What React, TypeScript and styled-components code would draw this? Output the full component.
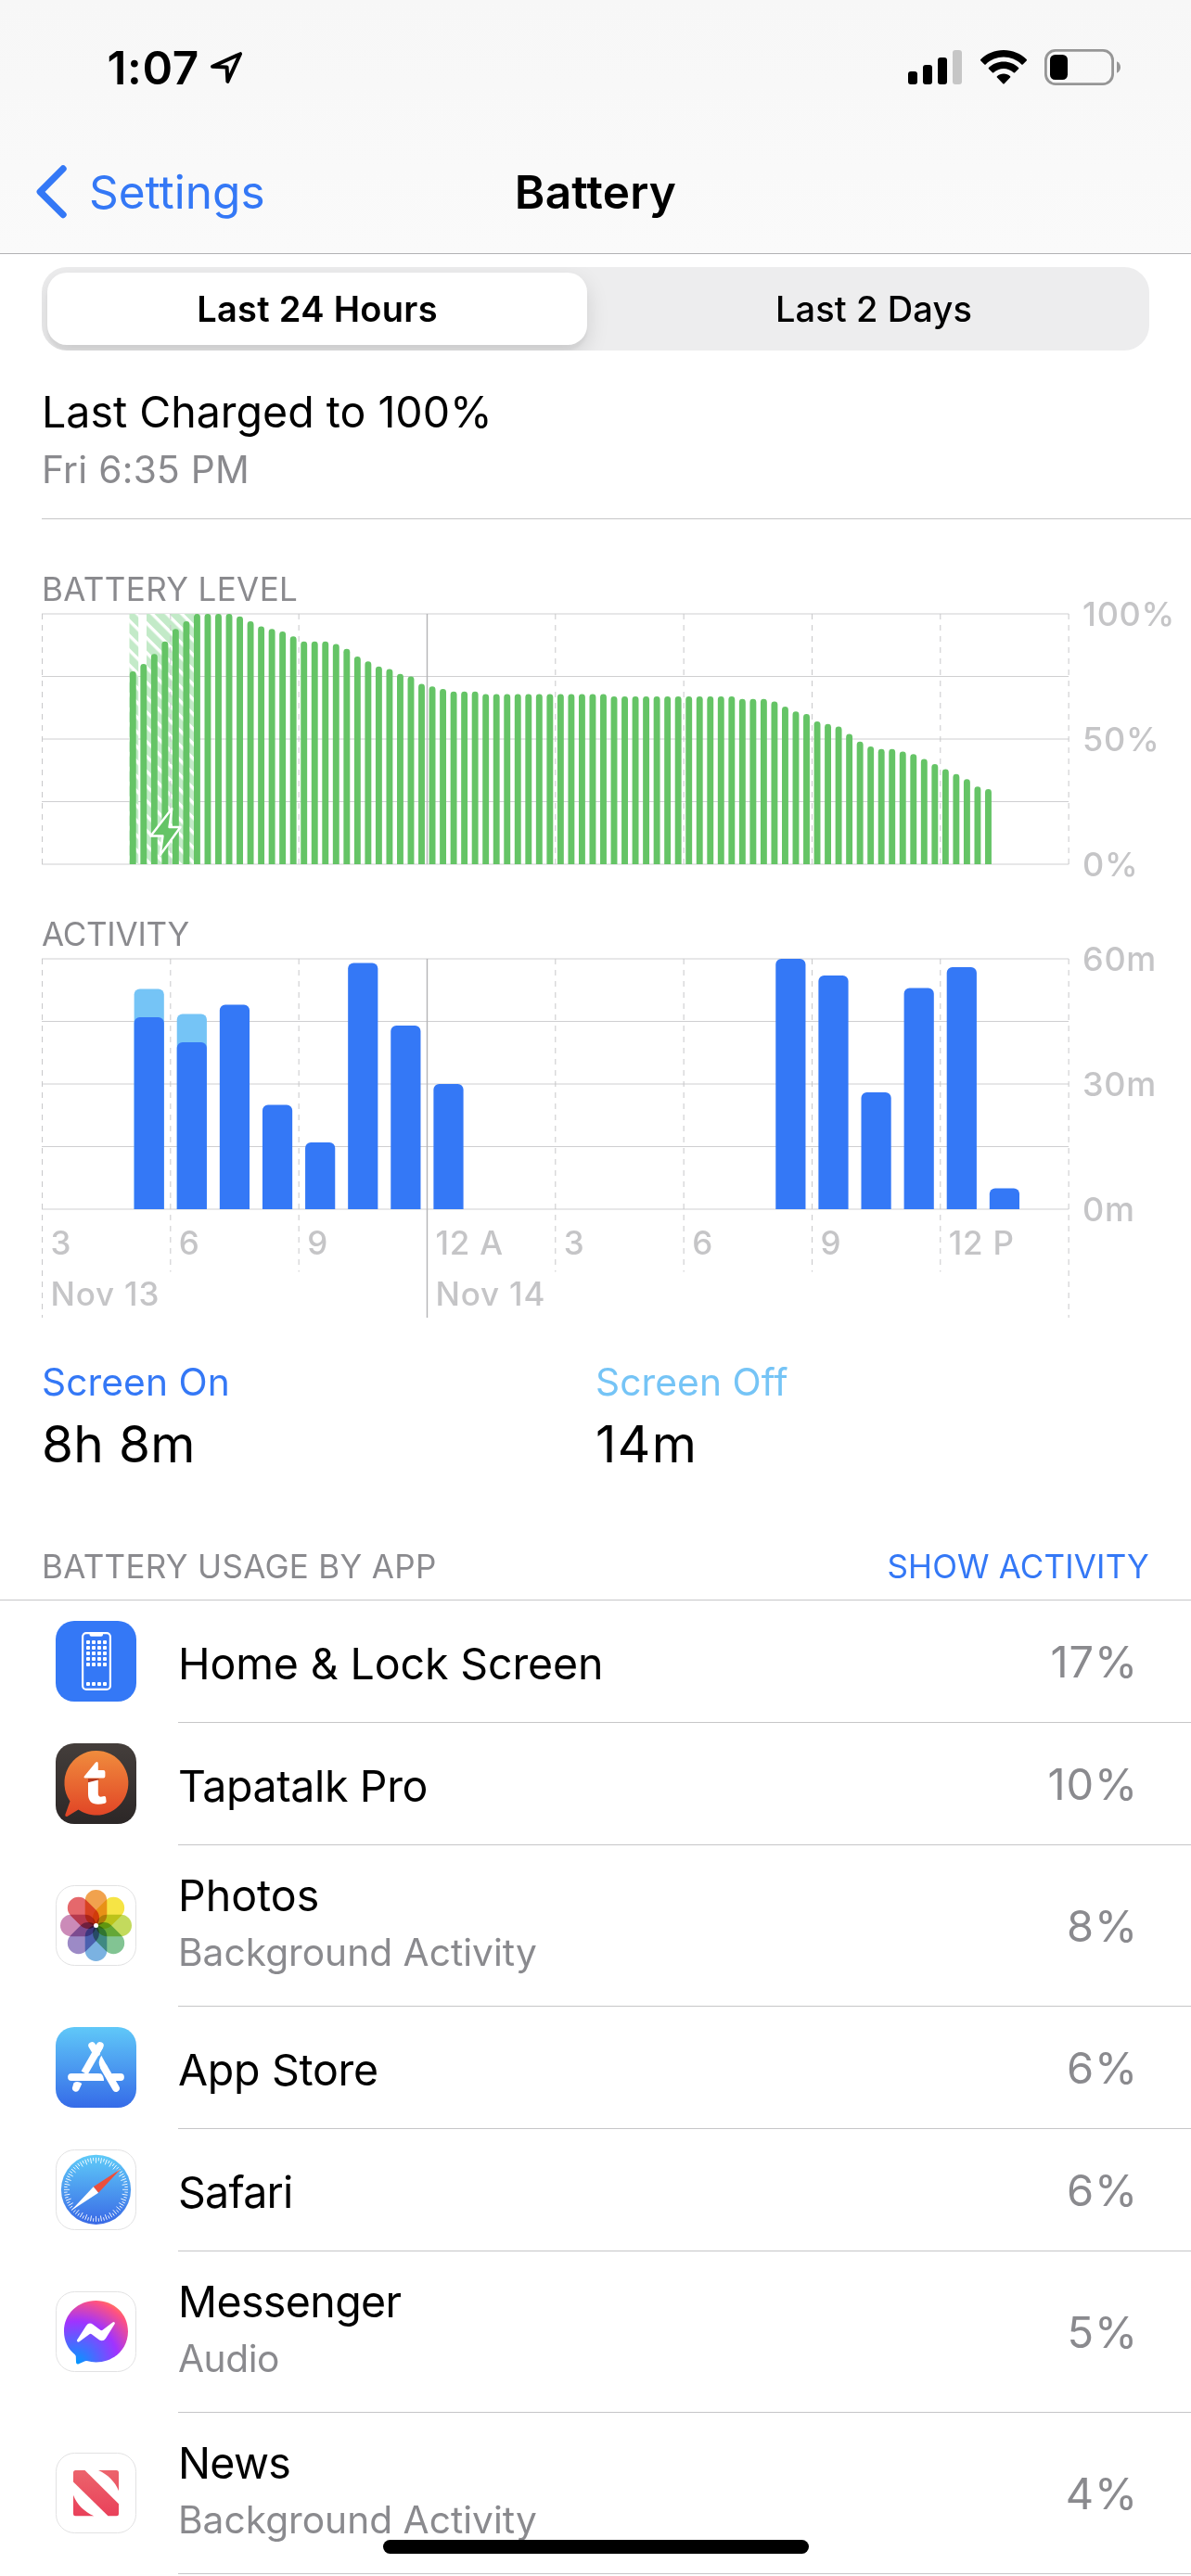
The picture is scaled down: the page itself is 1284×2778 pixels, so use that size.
import React from "react";
import styled, { createGlobalStyle } from "styled-components";

const BLUE = "#3478f6";
const SKY = "#75c4f6";
const GREEN = "#65c466";
const GREY = "#8a8a8e";
const AXIS = "#c5c5c7";
const HAIRLINE = "#c6c6c8";

const GlobalStyle = createGlobalStyle`
  body {
    margin: 0;
    background: #fff;
    color: #000;
    font-family: Inter, "Liberation Sans", sans-serif;
  }
`;

const Screen = styled.div`
  position: relative;
  width: 1284px;
  height: 2778px;
  overflow: hidden;
  background: #fff;
`;

/* ---------- header ---------- */

const Header = styled.header`
  height: 273px;
  border-bottom: 1px solid #b2b2b4;
  background: linear-gradient(#f7f7f7, #fafafa);
`;

const StatusBar = styled.div`
  box-sizing: border-box;
  display: flex;
  align-items: center;
  justify-content: space-between;
  height: 140px;
  padding: 5px 76px 0 115.5px;
`;

const StatusGroup = styled.div<{ $gap: number }>`
  display: flex;
  align-items: center;
  gap: ${(p) => p.$gap}px;
`;

const Clock = styled.span`
  font-size: 49.5px;
  font-weight: 600;
  letter-spacing: 0.6px;
  line-height: 60px;
`;

const NavBar = styled.nav`
  display: grid;
  grid-template-columns: 1fr auto 1fr;
  align-items: center;
  height: 133px;
  padding: 0 36px;
`;

const BackLink = styled.a`
  display: flex;
  align-items: center;
  gap: 20px;
  color: ${BLUE};
  font-size: 49.5px;
  line-height: 60px;
`;

const Title = styled.h1`
  margin: 0;
  font-size: 49.5px;
  font-weight: 600;
  letter-spacing: 0.22px;
  line-height: 60px;
`;

/* ---------- range picker ---------- */

const Segmented = styled.div`
  box-sizing: border-box;
  display: grid;
  grid-template-columns: 1fr 1fr;
  gap: 18px;
  height: 90px;
  margin: 14px 45px 0;
  padding: 6px;
  border-radius: 27px;
  background: #ededee;
  overflow: hidden;
`;

const Segment = styled.div<{ $active?: boolean }>`
  display: flex;
  align-items: center;
  justify-content: center;
  border-radius: 21px;
  font-size: 38px;
  font-weight: ${(p) => (p.$active ? 600 : 500)};
  letter-spacing: ${(p) => (p.$active ? 0.3 : 0.1)}px;
  background: ${(p) => (p.$active ? "#fff" : "transparent")};
  box-shadow: ${(p) =>
    p.$active ? "0 9px 24px rgba(0,0,0,.12), 0 6px 3px rgba(0,0,0,.04)" : "none"};
`;

/* ---------- last charge ---------- */

const LastCharge = styled.section`
  margin-left: 45px;
  padding: 36px 0 19px;
  border-bottom: 1px solid ${HAIRLINE};
`;

const ChargeTitle = styled.div`
  font-size: 46.5px;
  line-height: 60px;
`;

const ChargeTime = styled.div`
  color: ${GREY};
  font-size: 40.7px;
  letter-spacing: 0.27px;
  line-height: 66px;
`;

/* ---------- charts ---------- */

const ChartSection = styled.section`
  padding: 55px 0 0 45px;
`;

const Caption = styled.div<{ $track?: number; $color?: string }>`
  color: ${(p) => p.$color ?? GREY};
  font-size: 35px;
  letter-spacing: ${(p) => p.$track ?? 0}px;
  line-height: 40px;
`;

const ChartRow = styled.div`
  display: flex;
  height: 270px;
  margin-top: 7px;
`;

const Plot = styled.svg`
  flex: none;
  width: 1108px;
  height: 270px;
  overflow: visible;
`;

const ScaleAxis = styled.div`
  display: flex;
  flex-direction: column;
  justify-content: space-between;
  height: 310px;
  margin: -20px 0 0 14px;
  color: ${AXIS};
  font-size: 36px;
  font-weight: 500;
  letter-spacing: 0.7px;
  line-height: 40px;
`;

const HourAxis = styled.div`
  display: grid;
  grid-template-columns: repeat(8, 138.33px);
  color: ${AXIS};
  font-size: 35px;
  font-weight: 500;
  letter-spacing: 0.8px;
  line-height: 72px;
`;

const DayAxis = styled(HourAxis)`
  grid-template-columns: 415px 1fr;
  line-height: 38px;
`;

const AxisLabel = styled.span`
  padding-left: 9.5px;
  white-space: nowrap;
`;

/* ---------- totals ---------- */

const Totals = styled.section`
  display: grid;
  grid-template-columns: 1fr 1fr;
  padding: 47px 45px 0;
`;

const TotalLabel = styled.div<{ $color: string }>`
  color: ${(p) => p.$color};
  font-size: 40.7px;
  letter-spacing: 0.1px;
  line-height: 60px;
`;

const TotalValue = styled.div<{ $track: number }>`
  font-size: 55px;
  letter-spacing: ${(p) => p.$track}px;
  line-height: 72px;
`;

/* ---------- app list ---------- */

const ListHeader = styled.div`
  display: flex;
  justify-content: space-between;
  padding: 76px 45px 16px;
  border-bottom: 1px solid ${HAIRLINE};
`;

const Row = styled.div<{ $tall: boolean }>`
  display: flex;
  align-items: center;
  height: ${(p) => (p.$tall ? 174 : 132)}px;
  padding-left: 60px;
`;

const IconSvg = styled.svg`
  flex: none;
  width: 87px;
  height: 87px;
  margin-bottom: 1px;
  overflow: visible;
`;

const RowBody = styled.div`
  box-sizing: border-box;
  display: flex;
  flex: 1;
  align-items: center;
  justify-content: space-between;
  height: 100%;
  margin-left: 45px;
  padding-right: 60px;
  border-bottom: 1px solid ${HAIRLINE};
`;

const RowText = styled.div<{ $tall: boolean }>`
  padding: ${(p) => (p.$tall ? "0 0 1px" : "4px 0 0")};
`;

const AppName = styled.div<{ $track: number }>`
  font-size: 46.5px;
  letter-spacing: ${(p) => p.$track}px;
  line-height: 60px;
`;

const AppDetail = styled.div<{ $track: number }>`
  color: ${GREY};
  font-size: 40.7px;
  letter-spacing: ${(p) => p.$track}px;
  line-height: 64px;
`;

const Share = styled.div`
  color: ${GREY};
  font-size: 47px;
  letter-spacing: 0.9px;
  margin-right: -3px;
`;

const HomeIndicator = styled.div`
  position: absolute;
  left: 413px;
  bottom: 24px;
  width: 459px;
  height: 15px;
  border-radius: 8px;
  background: #000;
`;

/* ---------- status glyphs ---------- */

const LocationGlyph = () => (
  <svg width="36" height="36" viewBox="0 0 36 36">
    <path
      d="M3 16.800 33 3.200 19.400 32.800 18.600 17.400Z"
      fill="none"
      stroke="#000"
      strokeWidth="4"
      strokeLinejoin="round"
    />
  </svg>
);

const SignalGlyph = () => (
  <svg width="58" height="37" viewBox="0 0 58 37">
    <rect x="0" y="23" width="10" height="14" rx="3" />
    <rect x="16" y="16" width="10" height="21" rx="3" />
    <rect x="32" y="8" width="10" height="29" rx="3" />
    <rect x="48" y="0" width="10" height="37" rx="3" fill="#c6c6c6" />
  </svg>
);

const WifiGlyph = () => (
  <svg width="50" height="37" viewBox="0 0 50 37">
    <path d="M25 0C34.5 0 43.4 3.7 49.7 10c.4.4.4 1 0 1.4l-4 4c-.4.4-1 .4-1.400 0C39.100 10.400 32.300 7.500 25 7.500S10.900 10.400 5.700 15.400c-.4.4-1 .4-1.400 0l-4-4c-.4-.4-.4-1 0-1.400C6.600 3.700 15.500 0 25 0Z" />
    <path d="M25 12.500c6.100 0 11.800 2.400 16.100 6.400.4.4.4 1 0 1.400l-4 4c-.4.4-1 .4-1.400 0-2.900-2.600-6.600-4.200-10.700-4.200s-7.800 1.600-10.700 4.200c-.4.4-1 .4-1.400 0l-4-4c-.4-.4-.4-1 0-1.400 4.300-4 10-6.400 16.100-6.400Z" />
    <path d="M25 25.500c2.700 0 5.200 1 7.100 2.700.4.4.4 1 0 1.400l-6.400 6.700c-.4.4-1 .4-1.400 0l-6.400-6.700c-.4-.4-.4-1 0-1.400 1.900-1.700 4.400-2.700 7.100-2.700Z" />
  </svg>
);

const BatteryGlyph = () => (
  <svg width="82" height="39" viewBox="0 0 82 39">
    <rect x="1.400" y="1.400" width="72.200" height="36.200" rx="10.500" fill="none" stroke="#969696" strokeWidth="2.800" />
    <rect x="6" y="6" width="19" height="27" rx="5.500" />
    <path d="M78 13.300c2.500 1.100 4 3.500 4 6.200s-1.500 5.100-4 6.200Z" fill="#969696" />
  </svg>
);

const BackGlyph = () => (
  <svg width="40" height="58" viewBox="0 0 40 58">
    <path
      d="M32 4 7.300 28.800 32 53.500"
      fill="none"
      stroke={BLUE}
      strokeWidth="7.400"
      strokeLinecap="round"
      strokeLinejoin="round"
    />
  </svg>
);

/* ---------- app icons, all on an 87 unit tile ---------- */

const WhiteTile = () => (
  <rect x=".5" y=".5" width="86" height="86" rx="20" fill="#fff" stroke="#e2e2e3" />
);

const HomeIcon = () => (
  <IconSvg viewBox="0 0 87 87">
    <rect width="87" height="87" rx="20" fill={BLUE} />
    <rect x="29.100" y="13.100" width="29.800" height="60.800" rx="4" fill="none" stroke="#fff" strokeWidth="2.200" />
    <path d="M36.500 13H51v1.800q0 1.900-2 1.900H38.500q-2 0-2-1.900Z" fill="#fff" />
    {[23, 29, 35, 41, 47, 68].map((y) =>
      [35, 41, 47, 53].map((x) => (
        <rect key={`${x}-${y}`} x={x - 2} y={y - 2} width="4" height="4" rx="1" fill="#fff" />
      )),
    )}
  </IconSvg>
);

const TapatalkIcon = () => (
  <IconSvg viewBox="0 0 87 87">
    <defs>
      <linearGradient id="tapBg" x1="0" y1="0" x2="0" y2="1">
        <stop offset="0" stopColor="#443e3b" />
        <stop offset="1" stopColor="#2c2727" />
      </linearGradient>
      <linearGradient id="tapBubble" x1="0" y1="8" x2="0" y2="78" gradientUnits="userSpaceOnUse">
        <stop offset="0" stopColor="#f08c3d" />
        <stop offset="1" stopColor="#e14526" />
      </linearGradient>
    </defs>
    <rect width="87" height="87" rx="20" fill="url(#tapBg)" />
    <path
      d="M43.500 8A34.500 34.800 0 1 1 24.500 71.600L12.300 79Q10 79.500 10.300 77L15.500 62.500A34.500 34.800 0 0 1 43.500 8Z"
      fill="url(#tapBubble)"
    />
    <path d="M35 38H46.500V39.500L35 42.500Z" fill="#b63a1f" />
    <path
      d="M43 20.700q2.800-1.700 2.800 1.300v7h5.700q1.900 0 1.900 2v4.500q0 2-1.900 2H31.800q-2-.2-.9-2Z"
      fill="#fff"
    />
    <path
      d="M35 42.300 45.800 39.500V54q0 4.200 4 3.600l2.500-.6q1.700-.2 1.800 1.500l.5 4.300q0 1.500-1.600 2Q35 69 35 54.500Z"
      fill="#fff"
    />
  </IconSvg>
);

const PETALS = ["#f1a24e", "#f6e445", "#c3da5d", "#82c493", "#7bb2e1", "#9c8ac6", "#cb8bb8", "#e5686c"];

const Flower = styled.g`
  isolation: isolate;
`;

const Petal = styled.rect`
  mix-blend-mode: multiply;
`;

const PhotosIcon = () => (
  <IconSvg viewBox="0 0 87 87">
    <WhiteTile />
    <Flower transform="translate(43.500 43.500)">
      {PETALS.map((color, i) => (
        <Petal
          key={color}
          x="-11.800"
          y="-38.500"
          width="23.600"
          height="38.500"
          rx="11.800"
          fill={color}
          transform={`rotate(${i * 45})`}
        />
      ))}
      <circle r="2.500" fill="#fff" />
    </Flower>
  </IconSvg>
);

const AppStoreIcon = () => (
  <IconSvg viewBox="0 0 87 87">
    <defs>
      <linearGradient id="storeBg" x1="0" y1="0" x2="0" y2="1">
        <stop offset="0" stopColor="#60c8f8" />
        <stop offset="1" stopColor="#356be8" />
      </linearGradient>
    </defs>
    <rect width="87" height="87" rx="20" fill="url(#storeBg)" />
    <g stroke="#fff" strokeWidth="7.800" strokeLinecap="round" fill="none">
      <path d="M39.200 20 44 28" />
      <path d="M47.800 20 31 49.500" strokeLinecap="butt" />
      <path d="M47.800 20 45 25" />
      <path d="M17 54H45" />
      <path d="M62 54H70" />
      <path d="M52 43.500 65 66" />
    </g>
    <path d="M28.500 50.200H49q3 2.800 3 7.700H28Z" fill="#fff" />
    <path d="M49.300 30.800Q44.500 38 48.500 45L56 43Z" fill="#fff" />
    <path d="M19.500 60.200q4.500-2.500 8.800.8L25.200 67.800a3.900 3.900 0 0 1-6.800-3.800Z" fill="#fff" />
  </IconSvg>
);

const SafariIcon = () => (
  <IconSvg viewBox="0 0 87 87">
    <defs>
      <linearGradient id="safariDial" x1="0" y1="0" x2="0" y2="1">
        <stop offset="0" stopColor="#5fcbf8" />
        <stop offset="1" stopColor="#3969e6" />
      </linearGradient>
    </defs>
    <WhiteTile />
    <circle cx="43.500" cy="43.300" r="37.600" fill="url(#safariDial)" />
    <g transform="translate(43.500 43.300)" stroke="#fff" strokeWidth=".85">
      {Array.from({ length: 72 }, (_, i) => (
        <line key={i} y1="-34.500" y2={i % 2 ? -31 : -28.600} transform={`rotate(${i * 5})`} />
      ))}
    </g>
    <path d="M70.200 21 40.700 40.300 46.100 46.700Z" fill="#eb4f3d" />
    <path d="M16.600 66 40.700 40.300 46.100 46.700Z" fill="#fff" />
  </IconSvg>
);

const MessengerIcon = () => (
  <IconSvg viewBox="0 0 87 87">
    <defs>
      <radialGradient id="messenger" cx=".19" cy=".99" r="1.090">
        <stop offset="0" stopColor="#0099ff" />
        <stop offset=".61" stopColor="#a033ff" />
        <stop offset=".935" stopColor="#ff5280" />
        <stop offset="1" stopColor="#ff7061" />
      </radialGradient>
    </defs>
    <WhiteTile />
    <path
      d="M43.500 10C63 10 78 24.300 78 43.200S63 76.400 43.500 76.400c-3.400 0-6.700-.5-9.800-1.300q-1-.2-2 .2l-6.800 2.900q-2.600 1-2.900-1.700l-.2-6.300q-.1-1.200-1-2C13.300 62.200 9 53.400 9 43.200 9 24.300 24 10 43.500 10Z"
      fill="url(#messenger)"
    />
    <path
      d="M22.900 52.800 33 37q3-4.200 7.200-1.300l8 6q1.200.9 2.400 0l10.800-8.200q2.400-1.300 2.500 1.200L54 50.700q-3 4.300-7.200 1.500l-8-6q-1.200-.9-2.400 0L25.600 54.300q-2.400 1.200-2.700-1.500Z"
      fill="#fff"
    />
  </IconSvg>
);

const NewsIcon = () => (
  <IconSvg viewBox="0 0 87 87">
    <defs>
      <linearGradient id="news" x1="0" y1="19" x2="0" y2="68" gradientUnits="userSpaceOnUse">
        <stop offset="0" stopColor="#ec646c" />
        <stop offset="1" stopColor="#e9415a" />
      </linearGradient>
    </defs>
    <WhiteTile />
    <g fill="url(#news)">
      <path d="M21.500 19H31.500L68 55.300V65.800Q68 68.300 65.500 68.300H56.500L19 31.500V21.500Q19 19 21.500 19Z" />
      <path d="M46 19H65.500Q68 19 68 21.500V41.200C64 31 56 23.500 46 19Z" />
      <path d="M19 45.800C23 56 31 63.800 41.200 68.300H21.500Q19 68.300 19 65.800Z" />
    </g>
  </IconSvg>
);

/* ---------- data ---------- */

const LEVELS = [
  77, 80, 84, 89, 94, 97, 100, 100, 100, 100, 99, 97, 95, 94, 93, 91, 89, 89, 89, 88, 86, 83, 81, 79,
  78, 76, 75, 72, 71, 70, 69, 69, 69, ...Array(12).fill(68), ...Array(12).fill(67), 66, 66, 66, 65,
  63, 61, 60, 57, 56, 55, 52, 49, 47, 46, 46, 45, 44, 42, 40, 38, 36, 34, 31, 30,
];

const ACTIVITY = [
  { slot: 2, on: 46, off: 7 },
  { slot: 3, on: 40, off: 7 },
  { slot: 4, on: 49, off: 0 },
  { slot: 5, on: 25, off: 0 },
  { slot: 6, on: 16, off: 0 },
  { slot: 7, on: 59, off: 0 },
  { slot: 8, on: 44, off: 0 },
  { slot: 9, on: 30, off: 0 },
  { slot: 17, on: 60, off: 0 },
  { slot: 18, on: 56, off: 0 },
  { slot: 19, on: 28, off: 0 },
  { slot: 20, on: 53, off: 0 },
  { slot: 21, on: 58, off: 0 },
  { slot: 22, on: 5, off: 0 },
];

const APPS = [
  { name: "Home & Lock Screen", share: "17%", icon: <HomeIcon />, track: -0.12 },
  { name: "Tapatalk Pro", share: "10%", icon: <TapatalkIcon />, track: -0.37 },
  { name: "Photos", detail: "Background Activity", share: "8%", icon: <PhotosIcon />, track: 0 },
  { name: "App Store", share: "6%", icon: <AppStoreIcon />, track: -0.29 },
  { name: "Safari", share: "6%", icon: <SafariIcon />, track: -0.75 },
  { name: "Messenger", detail: "Audio", share: "5%", icon: <MessengerIcon />, track: -0.6, detailTrack: -0.47 },
  { name: "News", detail: "Background Activity", share: "4%", icon: <NewsIcon />, track: -0.7 },
];

/* ---------- chart drawing ---------- */

const LEFT = 0.5;
const THREE_HOURS = 138.33;
const HOUR = THREE_HOURS / 3;
const QUARTER = THREE_HOURS / 12;

const column = (x: number, top: number, width: number, r: number) =>
  `M${x} 270V${top + r}a${r} ${r} 0 0 1 ${r} ${-r}h${width - 2 * r}a${r} ${r} 0 0 1 ${r} ${r}V270Z`;

const LevelLines = () => (
  <g stroke="#cfcfd1">
    {[0, 67.5, 135, 202.5, 270].map((y) => (
      <line key={y} x1="0" x2={LEFT + 8 * THREE_HOURS} y1={y} y2={y} />
    ))}
  </g>
);

const TimeLines = ({ short, long }: { short: number; long: number }) => (
  <g stroke="#c8c8ca">
    {Array.from({ length: 9 }, (_, i) => {
      const x = LEFT + i * THREE_HOURS;
      const solid = i === 3;
      const end = solid || i === 0 || i === 8 ? long : short;
      return (
        <line
          key={i}
          x1={x}
          x2={x}
          y1="0"
          y2={end}
          stroke={solid ? "#b4b4b6" : undefined}
          strokeWidth={solid ? 1.4 : 1}
          strokeDasharray={solid ? undefined : "6 6"}
        />
      );
    })}
  </g>
);

const LevelPlot = () => (
  <Plot viewBox="0 0 1108 270">
    <defs>
      <pattern id="hatch" width="11.300" height="11.300" patternUnits="userSpaceOnUse" patternTransform="translate(94.500 5) rotate(45)">
        <rect width="11.300" height="11.300" fill="#c3eac8" />
        <rect width="11.300" height="3.400" fill="#fff" />
      </pattern>
    </defs>
    <LevelLines />
    <rect x="94.500" y="0" width="9.700" height="270" fill="url(#hatch)" />
    <rect x="113" y="0" width="51" height="270" fill="url(#hatch)" />
    <TimeLines short={270} long={270} />
    {LEVELS.map((level, i) => (
      <path
        key={i}
        d={column(LEFT + (8 + i) * QUARTER + 2.1, 270 - level * 2.7, 6.9, 3.4)}
        fill={GREEN}
      />
    ))}
    <path
      d="M140.300 210 117.500 239.500H130.500L127.700 260 149.500 230H137.500Z"
      fill={GREEN}
      stroke="#fff"
      strokeWidth="2.400"
      strokeLinejoin="round"
    />
  </Plot>
);

const ActivityPlot = () => (
  <Plot viewBox="0 0 1108 270">
    <LevelLines />
    <TimeLines short={337.5} long={387} />
    {ACTIVITY.map(({ slot, on, off }) => {
      const x = LEFT + slot * HOUR + 6.9;
      return (
        <g key={slot}>
          {off > 0 && <path d={column(x, 270 - (on + off - 0.2) * 4.5, 32.2, 6)} fill={SKY} />}
          <path d={column(x, 270 - on * 4.5, 32.2, 6)} fill={BLUE} />
        </g>
      );
    })}
  </Plot>
);

const HOURS = ["3", "6", "9", "12 A", "3", "6", "9", "12 P"];

export default function App() {
  return (
    <>
      <GlobalStyle />
      <Screen>
        <Header>
          <StatusBar>
            <StatusGroup $gap={11}>
              <Clock>1:07</Clock>
              <LocationGlyph />
            </StatusGroup>
            <StatusGroup $gap={19.5}>
              <SignalGlyph />
              <WifiGlyph />
              <BatteryGlyph />
            </StatusGroup>
          </StatusBar>
          <NavBar>
            <BackLink>
              <BackGlyph />
              Settings
            </BackLink>
            <Title>Battery</Title>
          </NavBar>
        </Header>

        <Segmented>
          <Segment $active>Last 24 Hours</Segment>
          <Segment>Last 2 Days</Segment>
        </Segmented>

        <LastCharge>
          <ChargeTitle>Last Charged to 100%</ChargeTitle>
          <ChargeTime>Fri 6:35 PM</ChargeTime>
        </LastCharge>

        <ChartSection>
          <Caption $track={0.37}>BATTERY LEVEL</Caption>
          <ChartRow>
            <LevelPlot />
            <ScaleAxis>
              <span>100%</span>
              <span>50%</span>
              <span>0%</span>
            </ScaleAxis>
          </ChartRow>
        </ChartSection>

        <ChartSection>
          <Caption $track={-0.25}>ACTIVITY</Caption>
          <ChartRow>
            <ActivityPlot />
            <ScaleAxis>
              <span>60m</span>
              <span>30m</span>
              <span>0m</span>
            </ScaleAxis>
          </ChartRow>
          <HourAxis>
            {HOURS.map((h, i) => (
              <AxisLabel key={i}>{h}</AxisLabel>
            ))}
          </HourAxis>
          <DayAxis>
            <AxisLabel>Nov 13</AxisLabel>
            <AxisLabel>Nov 14</AxisLabel>
          </DayAxis>
        </ChartSection>

        <Totals>
          <div>
            <TotalLabel $color={BLUE}>Screen On</TotalLabel>
            <TotalValue $track={0.3}>8h 8m</TotalValue>
          </div>
          <div>
            <TotalLabel $color={SKY}>Screen Off</TotalLabel>
            <TotalValue $track={1.4}>14m</TotalValue>
          </div>
        </Totals>

        <ListHeader>
          <Caption $track={0.31}>BATTERY USAGE BY APP</Caption>
          <Caption $color={BLUE} $track={0.15}>SHOW ACTIVITY</Caption>
        </ListHeader>

        {APPS.map((app) => (
          <Row key={app.name} $tall={!!app.detail}>
            {app.icon}
            <RowBody>
              <RowText $tall={!!app.detail}>
                <AppName $track={app.track}>{app.name}</AppName>
                {app.detail && <AppDetail $track={app.detailTrack ?? 0}>{app.detail}</AppDetail>}
              </RowText>
              <Share>{app.share}</Share>
            </RowBody>
          </Row>
        ))}

        <HomeIndicator />
      </Screen>
    </>
  );
}
